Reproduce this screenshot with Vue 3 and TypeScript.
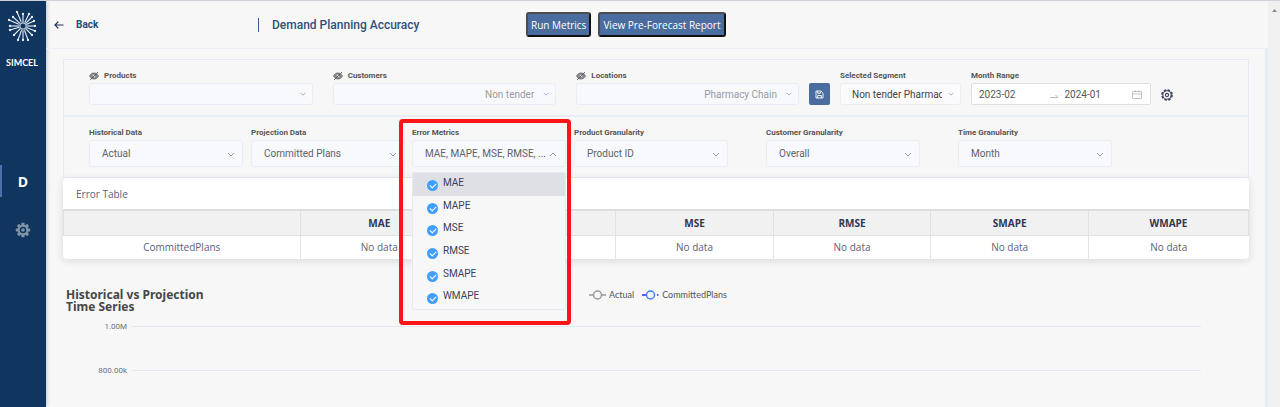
<script setup lang="ts">
import { ref } from 'vue'

interface Filter {
  id: string
  label: string
  value: string
}

const scopes: Filter[] = [
  { id: 'products', label: 'Products', value: '' },
  { id: 'customers', label: 'Customers', value: 'Non tender' },
  { id: 'locations', label: 'Locations', value: 'Pharmacy Chain' },
]

const sources: Filter[] = [
  { id: 'historical', label: 'Historical Data', value: 'Actual' },
  { id: 'projection', label: 'Projection Data', value: 'Committed Plans' },
]

const granularities: Filter[] = [
  { id: 'product-granularity', label: 'Product Granularity', value: 'Product ID' },
  { id: 'customer-granularity', label: 'Customer Granularity', value: 'Overall' },
  { id: 'time-granularity', label: 'Time Granularity', value: 'Month' },
]

const metrics = ['MAE', 'MAPE', 'MSE', 'RMSE', 'SMAPE', 'WMAPE']
const chosen = ref<string[]>([...metrics])
const open = ref(true)
const monthFrom = ref('2023-02')
const monthTo = ref('2024-01')
const ticks = ['1.00M', '800.00k']

const rays: [number, number][] = [
  [-6, -14], [0, -12], [6, -12], [9, -9], [11, -5], [12, 0], [12, 5], [9, 9],
  [5, 14], [0, 14], [-5, 14], [-9, 9], [-13, 4], [-13, 0], [-14, -6], [-10, -9],
]
</script>

<template>
  <div class="app">
    <aside class="side">
      <svg class="logo" viewBox="-16 -16 32 32" aria-hidden="true">
        <g stroke="#e9eef4" stroke-width="1.1" fill="#e9eef4">
          <template v-for="([x, y], i) in rays" :key="i">
            <line :x1="x * 0.3" :y1="y * 0.3" :x2="x" :y2="y" />
            <circle :cx="x" :cy="y" r="0.6" />
          </template>
        </g>
        <circle r="3.2" fill="#10355f" stroke="#b9c6d4" stroke-width="1.2" />
      </svg>
      <span class="brand">SIMCEL</span>
      <a class="nav current" href="#demand">D</a>
      <a class="nav" href="#settings" aria-label="Settings">
        <svg width="16" height="16" viewBox="0 0 16 16" aria-hidden="true">
          <g fill="#8194a8">
            <rect v-for="a in 8" :key="a" x="6.4" y="0.8" width="3.2" height="3.4" rx="0.8" :transform="`rotate(${a * 45} 8 8)`" />
          </g>
          <circle cx="8" cy="8" r="4.3" fill="none" stroke="#8194a8" stroke-width="2" />
          <circle cx="8" cy="8" r="1.8" fill="#8194a8" />
        </svg>
      </a>
    </aside>

    <div class="page">
      <header class="top">
        <a class="back" href="#back">
          <svg width="10" height="8" viewBox="0 0 10 8" fill="none" stroke="#1d3557" stroke-width="1.2" aria-hidden="true">
            <path d="M9.5 4H1M4.3 0.7L1 4l3.3 3.3" />
          </svg>
          Back
        </a>
        <h1>Demand Planning Accuracy</h1>
        <div class="actions">
          <button type="button" class="action">Run Metrics</button>
          <button type="button" class="action">View Pre-Forecast Report</button>
        </div>
      </header>

      <main class="body">
        <section class="filters">
          <div class="row scope-row">
            <div v-for="f in scopes" :key="f.id" class="field">
              <label :for="f.id">
                <svg class="eye" width="10" height="8" viewBox="0 0 10 8" aria-hidden="true">
                  <path d="M0.5 4C2 1.5 3.5 1 5 1s3 .5 4.500 3C8 6.500 6.500 7 5 7S2 6.500 0.500 4z" fill="#8c8c8c" stroke="#666" stroke-width="0.8" />
                  <circle cx="5" cy="4" r="1.300" fill="#e4e4e4" />
                  <path d="M1.200 7.800L9 0.200" stroke="#555" stroke-width="1" />
                </svg>
                {{ f.label }}
              </label>
              <div class="pick">
                <select :id="f.id" class="right"><option>{{ f.value }}</option></select>
                <svg class="chev small" viewBox="0 0 8 5"><path d="M1 1l3 3 3-3" /></svg>
              </div>
            </div>
            <button type="button" class="save" aria-label="Save segment">
              <svg width="9" height="9" viewBox="0 0 9 9" fill="none" stroke="#fff" stroke-width="0.9" aria-hidden="true">
                <path d="M1 1h4.800L8 3.200V8H1zM2.700 1v2.300h2.600V1.500M2.700 8V5.500h3.600V8" />
              </svg>
            </button>
            <div class="field segment">
              <label for="segment">Selected Segment</label>
              <div class="pick">
                <select id="segment"><option>Non tender Pharmacy</option></select>
                <svg class="chev small" viewBox="0 0 8 5"><path d="M1 1l3 3 3-3" /></svg>
              </div>
            </div>
            <div class="field months">
              <label for="month-from">Month Range</label>
              <div class="range">
                <input id="month-from" v-model="monthFrom" type="text" />
                <svg class="to" width="8" height="4" viewBox="0 0 8 4" fill="none" stroke="#b8b8b8" aria-hidden="true"><path d="M0 3.500h8L5.500 1" /></svg>
                <input v-model="monthTo" type="text" aria-label="Month to" />
                <svg width="10" height="9" viewBox="0 0 10 9" fill="none" stroke="#bdbdbd" stroke-width="0.9" aria-hidden="true">
                  <path d="M0.500 1.500h9v7h-9zM0.500 4h9M3 0v2.500M7 0v2.500" />
                </svg>
              </div>
            </div>
            <button type="button" class="gear" aria-label="Filter settings">
              <svg width="12" height="12" viewBox="0 0 12 12" fill="none" stroke="#3a4058" aria-hidden="true">
                <circle cx="6" cy="6" r="5" stroke-width="1.700" stroke-dasharray="2.400 1.527" />
                <circle cx="6" cy="6" r="4.200" stroke-width="1.100" />
                <circle cx="6" cy="6" r="1.600" stroke-width="1.100" />
              </svg>
            </button>
          </div>

          <div class="row data-row">
            <div v-for="f in sources" :key="f.id" class="field">
              <label :for="f.id">{{ f.label }}</label>
              <div class="pick">
                <select :id="f.id"><option>{{ f.value }}</option></select>
                <svg class="chev" viewBox="0 0 8 5"><path d="M1 1l3 3 3-3" /></svg>
              </div>
            </div>

            <div class="field metrics">
              <label for="metrics">Error Metrics</label>
              <button id="metrics" type="button" class="multi" :aria-expanded="open" @click="open = !open">
                <span>{{ chosen.slice(0, 4).join(', ') }}, ...</span>
                <svg class="chev" viewBox="0 0 8 5"><path d="M1 4l3-3 3 3" /></svg>
              </button>
              <div v-if="open" class="menu">
                <label v-for="(m, i) in metrics" :key="m" :class="['option', { active: i === 0 }]">
                  <input v-model="chosen" type="checkbox" :value="m" />
                  <span>{{ m }}</span>
                </label>
              </div>
              <div class="highlight"></div>
            </div>

            <div v-for="f in granularities" :key="f.id" class="field">
              <label :for="f.id">{{ f.label }}</label>
              <div class="pick">
                <select :id="f.id"><option>{{ f.value }}</option></select>
                <svg class="chev" viewBox="0 0 8 5"><path d="M1 1l3 3 3-3" /></svg>
              </div>
            </div>
          </div>
        </section>

        <section class="card">
          <h2>Error Table</h2>
          <table>
            <thead>
              <tr>
                <th class="first"></th>
                <th v-for="m in metrics" :key="m" scope="col">{{ m }}</th>
              </tr>
            </thead>
            <tbody>
              <tr>
                <td>CommittedPlans</td>
                <td v-for="m in metrics" :key="m">No data</td>
              </tr>
            </tbody>
          </table>
        </section>

        <section class="chart">
          <div class="chart-head">
            <h2>Historical vs Projection<br />Time Series</h2>
            <div class="legend">
              <span class="key">
                <svg width="17" height="10" viewBox="0 0 17 10" fill="none" stroke="#999" stroke-width="1.500" aria-hidden="true">
                  <path d="M0 5h4.500M12.500 5H17" /><circle cx="8.500" cy="5" r="4" />
                </svg>
                Actual
              </span>
              <span class="key">
                <svg width="17" height="10" viewBox="0 0 17 10" fill="none" stroke-width="1.500" aria-hidden="true">
                  <path d="M0 5h4.500M15 5h1.500" stroke="#2a2aff" /><circle cx="8.500" cy="5" r="4" stroke="#3b82f6" />
                </svg>
                CommittedPlans
              </span>
            </div>
          </div>
          <div class="plot">
            <div v-for="t in ticks" :key="t" class="tick"><span>{{ t }}</span><i></i></div>
          </div>
        </section>
      </main>
    </div>

    <div class="scroll" aria-hidden="true">
      <svg width="5" height="3" viewBox="0 0 5 3"><path d="M0 3L2.500 0 5 3z" fill="#8b8b8b" /></svg>
    </div>
  </div>
</template>

<style>
body {
  background: #f7f7f8;
}
</style>

<style scoped>
* {
  box-sizing: border-box;
}
.app {
  display: flex;
  height: 100vh;
  overflow: hidden;
  border-top: 1px solid #cfd0d8;
  background: #f7f7f8;
  font-family: "Open Sans", "Noto Sans", sans-serif;
}
h1,
h2 {
  margin: 0;
}
button,
input,
select {
  margin: 0;
  font-family: Roboto, sans-serif;
}

.side {
  display: flex;
  flex: none;
  flex-direction: column;
  align-items: center;
  width: 46px;
  padding-top: 9px;
  background: #10355f;
  box-shadow: 1px 0 4px rgba(0, 0, 0, 0.2);
}
.logo {
  width: 32px;
  height: 32px;
}
.brand {
  margin: 15px 2px 96px 0;
  color: #fff;
  font: 700 9px/12px Lato, sans-serif;
}
.nav {
  display: flex;
  align-items: center;
  justify-content: center;
  width: 46px;
  height: 32px;
  margin-bottom: 17px;
  border: solid transparent;
  border-width: 0 2px;
  color: #fff;
  font-size: 14px;
  font-weight: 700;
  text-decoration: none;
}
.nav.current {
  border-left-color: #4d70aa;
}

.page {
  flex: 1;
  min-width: 0;
}
.top {
  display: grid;
  grid-template-columns: 212px 268px 1fr;
  align-items: center;
  height: 48px;
  border-bottom: 1px solid #ecf0f6;
  font-family: Roboto, sans-serif;
}
.back {
  display: flex;
  gap: 12px;
  align-items: center;
  padding-left: 8px;
  color: #274a75;
  font-size: 10px;
  font-weight: 700;
  text-decoration: none;
}
h1 {
  padding-left: 13px;
  border-left: 1px solid #3a5b85;
  color: #2f517c;
  font-size: 12px;
  font-weight: 500;
  line-height: 14px;
}
.actions {
  display: flex;
  gap: 7px;
}
.action {
  height: 25px;
  padding: 0 3px;
  border: 2px solid;
  border-color: #4c4c4c #111 #111 #4c4c4c;
  border-radius: 3px;
  background: #4a6c9f;
  color: #fff;
  font: 500 10px/14px "Open Sans", sans-serif;
  white-space: nowrap;
}

.body {
  height: calc(100% - 48px);
  padding: 10px 16px 0 17px;
  border-right: 3px solid #e6ebf3;
}
.filters {
  border: 1px solid #e8eaf3;
}
.row {
  display: grid;
  padding: 9px 0 10px 25px;
}
.scope-row {
  grid-template-columns: minmax(0, 234fr) minmax(0, 234fr) minmax(0, 223fr) 21px 121px 180px 12px;
  column-gap: 10px;
  align-items: end;
  padding-right: 75px;
}
.scope-row > .field:nth-child(-n + 2) {
  margin-right: 10px;
}
.data-row {
  grid-template-columns: 162fr 161fr 162fr 192fr 192fr 154fr;
  padding-right: 136px;
  border-top: 2px solid #e8ecf4;
}
.field {
  position: relative;
  min-width: 0;
}
.data-row > .field {
  width: 154px;
}
.field > label {
  display: flex;
  gap: 5px;
  align-items: center;
  height: 13px;
  margin-bottom: 1px;
  color: #555;
  font: 700 8px/13px Roboto, sans-serif;
  white-space: nowrap;
}
.pick {
  position: relative;
}
.pick select,
.multi {
  display: block;
  width: 100%;
  height: 27px;
  padding: 0 28px 0 12px;
  border: 1px solid #e8edf6;
  border-radius: 3px;
  background: #f7f9fd;
  color: #606266;
  font-size: 10px;
  text-align: left;
  appearance: none;
}
.scope-row .pick select {
  height: 22px;
  padding: 0 21px 0 12px;
}
.scope-row .pick .right {
  color: #999ca3;
  text-align-last: right;
}
.scope-row .segment select {
  padding: 0 18px 0 11px;
  border-color: #eceef4;
  background: #fbfbfd;
  color: #444;
}
.chev {
  position: absolute;
  top: 50%;
  right: 8px;
  width: 8px;
  height: 5px;
  margin-top: -2px;
  fill: none;
  stroke: #8f9bb8;
  pointer-events: none;
}
.chev.small {
  right: 7px;
  width: 6px;
  height: 4px;
}
.save {
  display: grid;
  place-items: center;
  height: 22px;
  padding: 0;
  border: 0;
  border-radius: 2px;
  background: #4a6c9f;
}
.range {
  display: flex;
  align-items: center;
  height: 22px;
  padding: 0 8px 0 7px;
  border: 1px solid #dfdfe2;
  border-radius: 2px;
  background: #fff;
}
.range input {
  flex: 68;
  width: 0;
  min-width: 0;
  padding: 0;
  border: 0;
  background: none;
  color: #555;
  font-size: 10px;
}
.range input:first-child {
  flex-grow: 72;
}
.range svg {
  flex: none;
}
.range .to {
  align-self: flex-end;
  margin: 0 6px 6px 0;
}
.gear {
  height: 20px;
  padding: 0;
  border: 0;
  background: none;
}
.gear svg {
  display: block;
}

.multi {
  position: relative;
  padding-right: 16px;
  white-space: nowrap;
}
.menu {
  position: absolute;
  z-index: 2;
  top: 46px;
  left: 0;
  display: grid;
  grid-template-rows: repeat(6, 1fr);
  width: 100%;
  height: 138px;
  border: 1px solid #e6e9f2;
  border-radius: 2px;
  background: #f7f7f8;
}
.option {
  display: flex;
  gap: 5px;
  padding-left: 14px;
  color: #3b4058;
  font: 400 10px/20px Roboto, sans-serif;
}
.option.active {
  background: #dfe0e6;
}
.option input {
  position: relative;
  width: 11px;
  height: 11px;
  margin-top: 7px;
  border-radius: 50%;
  background: #409eff;
  appearance: none;
}
.option input:not(:checked) {
  background: #d5d9e2;
}
.option input::before {
  position: absolute;
  top: 3px;
  left: 3px;
  width: 5px;
  height: 3px;
  border: solid #fff;
  border-width: 0 0 1px 1px;
  content: "";
  transform: rotate(-45deg);
}
.highlight {
  position: absolute;
  z-index: 3;
  top: -7px;
  right: -5px;
  left: -13px;
  height: 206px;
  border: 4px solid #fb1418;
  border-radius: 4px;
  pointer-events: none;
}

.card {
  overflow: hidden;
  border-radius: 4px;
  background: #fff;
  box-shadow: 0 2px 8px rgba(0, 0, 0, 0.12);
}
.card h2 {
  height: 31px;
  padding-left: 13px;
  color: #5c6078;
  font-size: 10px;
  font-weight: 400;
  line-height: 33px;
}
table {
  width: 100%;
  border-collapse: collapse;
  table-layout: fixed;
  color: #5c6078;
  font-size: 10px;
  line-height: 14px;
  text-align: center;
}
th {
  width: 13.3%;
  height: 25px;
  padding: 0;
  border: 1px solid #e0e0e0;
  border-top: 2px solid #dedede;
  background: #f1f1f1;
  color: #32364f;
  font-weight: 700;
}
th.first {
  width: 20%;
}
th:last-child {
  width: auto;
}
td {
  height: 24px;
  padding: 0;
  border-left: 1px solid #e4e4e4;
}
td:first-child {
  border-left: 0;
}

.chart {
  padding: 30px 48px 0 3px;
}
.chart-head {
  display: grid;
  grid-template-columns: 523px 1fr;
}
.chart-head h2 {
  color: #464646;
  font-family: "Noto Sans", sans-serif;
  font-size: 12px;
  font-weight: 700;
  line-height: 12px;
}
.legend {
  display: flex;
  gap: 8px;
  height: 12px;
  color: #555;
  font: 400 9px/12px Lato, sans-serif;
}
.key {
  display: flex;
  gap: 3px;
  align-items: center;
}
.plot {
  display: grid;
  row-gap: 31px;
  margin-top: 7px;
}
.tick {
  display: flex;
  gap: 5px;
  align-items: center;
  height: 13px;
  color: #6e7079;
  font: 400 8px/13px Roboto, sans-serif;
}
.tick span {
  width: 61px;
  text-align: right;
}
.tick i {
  flex: 1;
  height: 1px;
  background: #e4e7f2;
}

.scroll {
  flex: none;
  width: 12px;
  padding-top: 4px;
  background: #f0f0f0;
  text-align: center;
  line-height: 3px;
}
</style>
